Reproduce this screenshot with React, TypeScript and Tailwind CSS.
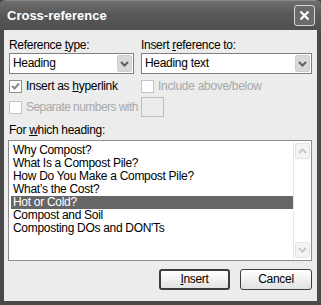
import React from "react";

const font = { fontFamily: '"Liberation Sans", Arial, sans-serif' };

const Chevron = ({ up = false, color = "#555" }: { up?: boolean; color?: string }) => (
	<svg width="9" height="6" viewBox="0 0 9 6" className={up ? "rotate-180" : ""}>
		<path d="M1 1 L4.5 4.5 L8 1" fill="none" stroke={color} strokeWidth="2" />
	</svg>
);

const Combo = ({ value, width }: { value: string; width: string }) => (
	<div className={`${width} h-[21px] bg-white border border-[#7f7f7f] flex items-center pl-[3px] pr-[1px]`}>
		<span className="flex-1 text-black">{value}</span>
		<div className="w-[15px] h-[17px] rounded-[2px] bg-[#d9d9d9] border border-[#cfcfcf] flex items-center justify-center">
			<Chevron color="#606060" />
		</div>
	</div>
);

const Check = ({ checked = false, disabled = false }: { checked?: boolean; disabled?: boolean }) => (
	<div
		className={`w-[13px] h-[13px] shrink-0 border ${disabled ? "border-[#c4c4c4]" : "border-[#8f8f8f]"} bg-white flex items-center justify-center`}
	>
		{checked && (
			<svg width="9" height="9" viewBox="0 0 9 9">
				<path d="M1 4 L3.5 6.5 L8 1.5" fill="none" stroke="#8a8a8a" strokeWidth="2" />
			</svg>
		)}
	</div>
);

const headings = [
	"Why Compost?",
	"What Is a Compost Pile?",
	"How Do You Make a Compost Pile?",
	"What’s the Cost?",
	"Hot or Cold?",
	"Compost and Soil",
	"Composting DOs and DON'Ts",
];

export default function App() {
	return (
		<div
			className="w-[321px] h-[305px] bg-[#4a4a4a] flex flex-col text-[12px] tracking-[-0.3px] leading-[13px] whitespace-nowrap"
			style={font}
		>
			{/* title bar */}
			<div className="h-[30px] flex items-center justify-between pl-[7px] pr-[6px] bg-gradient-to-b from-[#6e6e6e] via-[#575757] to-[#4f4f4f] rounded-t-[6px] border-t border-[#8a8a8a]">
				<span className="text-white font-bold text-[13px] tracking-normal">Cross-reference</span>
				<div className="w-[21px] h-[21px] rounded-[3px] border border-[#d8d8d8] bg-[#6a6a6a] flex items-center justify-center">
					<svg width="11" height="11" viewBox="0 0 11 11">
						<path d="M1.5 1.5 L9.5 9.5 M9.5 1.5 L1.5 9.5" stroke="white" strokeWidth="2.2" />
					</svg>
				</div>
			</div>

			{/* body */}
			<div className="flex-1 mx-[4px] mb-[4px] bg-[#ececec] px-[5px] pt-[9px] flex flex-col text-black">
				<div className="flex gap-[7px]">
					<div className="flex flex-col gap-[1px]">
						<span>
							Reference <u>t</u>ype:
						</span>
						<Combo value="Heading" width="w-[125px]" />
					</div>
					<div className="flex flex-col gap-[1px]">
						<span>
							Insert <u>r</u>eference to:
						</span>
						<Combo value="Heading text" width="w-[171px]" />
					</div>
				</div>

				<div className="flex mt-[6px] h-[13px]">
					<div className="w-[132px] flex items-center gap-[4px]">
						<Check checked />
						<span>
							Insert as <u>h</u>yperlink
						</span>
					</div>
					<div className="flex items-center gap-[4px] text-[#a8a8a8]">
						<Check disabled />
						<span>Include above/below</span>
					</div>
				</div>

				<div className="flex items-center mt-[4px] h-[20px]">
					<div className="w-[132px] shrink-0 flex items-center gap-[4px] text-[#a8a8a8]">
						<Check disabled />
						<span className="tracking-[-0.55px]">Separate numbers with</span>
					</div>
					<div className="w-[23px] h-[20px] border border-[#bdbdbd] bg-[#ececec]" />
				</div>

				<span className="mt-[7px]">
					For <u>w</u>hich heading:
				</span>

				<div className="mt-[3px] -ml-[1px] w-[304px] h-[121px] border border-[#8c8c8c] bg-white flex pl-[2px] pt-[3px] pr-[1px]">
					<div className="flex-1 flex flex-col">
						{headings.map((h) => (
							<div
								key={h}
								className={`h-[13px] pl-[2px] leading-[13px] ${h === "Hot or Cold?" ? "bg-[#666666] text-white" : "text-black"}`}
							>
								{h}
							</div>
						))}
					</div>
					<div className="w-[17px] -mt-[2px] mb-[1px] border-l border-[#e6e6e6] flex flex-col justify-between items-center py-[1px]">
						<div className="w-[15px] h-[16px] rounded-[2px] border border-[#e4e4e4] bg-[#f4f4f4] flex items-center justify-center">
							<Chevron up color="#c8c8c8" />
						</div>
						<div className="w-[15px] h-[16px] rounded-[2px] border border-[#e4e4e4] bg-[#f4f4f4] flex items-center justify-center">
							<Chevron color="#c8c8c8" />
						</div>
					</div>
				</div>

				<div className="flex justify-end gap-[10px] mt-[8px]">
					<button className="w-[71px] h-[21px] rounded-[3px] border-2 border-[#3c3c3c] bg-gradient-to-b from-white to-[#e2e2e2] text-black flex items-center justify-center">
						<span>
							<u>I</u>nsert
						</span>
					</button>
					<button className="w-[72px] h-[21px] rounded-[3px] border border-[#3c3c3c] bg-gradient-to-b from-white to-[#e2e2e2] text-black flex items-center justify-center">
						Cancel
					</button>
				</div>
			</div>
		</div>
	);
}
